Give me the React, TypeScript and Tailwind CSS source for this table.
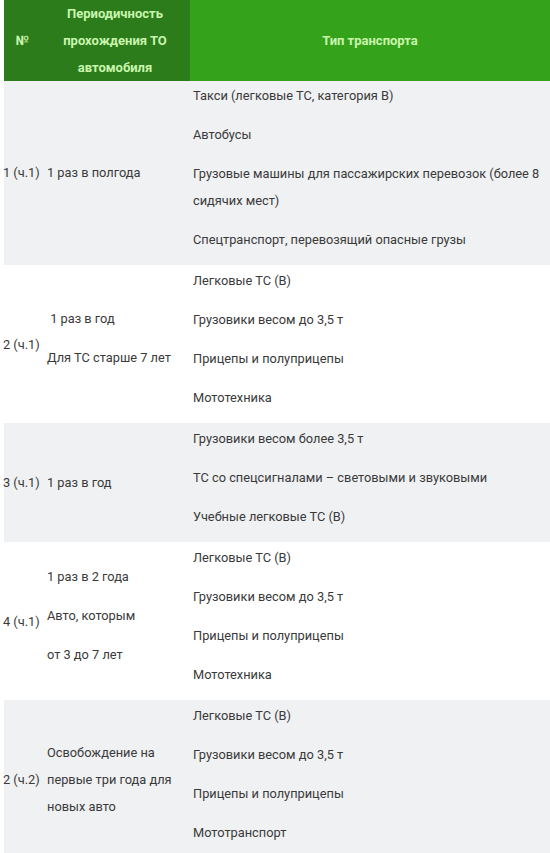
import React from "react";

type Row = {
  num: string;
  period: string[];
  periodParas: boolean;
  types: string[];
  gray: boolean;
};

const rows: Row[] = [
  {
    num: "1 (ч.1)",
    period: ["1 раз в полгода"],
    periodParas: false,
    types: [
      "Такси (легковые ТС, категория B)",
      "Автобусы",
      "Грузовые машины для пассажирских перевозок (более 8 сидячих мест)",
      "Спецтранспорт, перевозящий опасные грузы",
    ],
    gray: true,
  },
  {
    num: "2 (ч.1)",
    period: ["\u00a01 раз в год", "Для ТС старше 7 лет"],
    periodParas: true,
    types: ["Легковые ТС (B)", "Грузовики весом до 3,5 т", "Прицепы и полуприцепы", "Мототехника"],
    gray: false,
  },
  {
    num: "3 (ч.1)",
    period: ["1 раз в год"],
    periodParas: false,
    types: [
      "Грузовики весом более 3,5 т",
      "ТС со спецсигналами – световыми и звуковыми",
      "Учебные легковые ТС (B)",
    ],
    gray: true,
  },
  {
    num: "4 (ч.1)",
    period: ["1 раз в 2 года", "Авто, которым", "от 3 до 7 лет"],
    periodParas: true,
    types: ["Легковые ТС (B)", "Грузовики весом до 3,5 т", "Прицепы и полуприцепы", "Мототехника"],
    gray: false,
  },
  {
    num: "2 (ч.2)",
    period: ["Освобождение на первые три года для новых авто"],
    periodParas: false,
    types: ["Легковые ТС (B)", "Грузовики весом до 3,5 т", "Прицепы и полуприцепы", "Мототранспорт"],
    gray: true,
  },
];

export default function App() {
  return (
    <div
      className="w-[550px] bg-white text-[12.8px] leading-[27px] text-[#3a3a3a]"
      style={{ fontFamily: "Roboto, 'Liberation Sans', sans-serif" }}
    >
      <div className="ml-[4px]">
        <div className="grid grid-cols-[36px_150px_1fr] h-[80px] text-[13px] font-bold text-[#c9f5ae]">
          <div className="bg-[#2c7c1c] flex items-center justify-center">№</div>
          <div className="bg-[#2c7c1c] flex items-center justify-center text-center leading-[27px]">
            Периодичность
            <br />
            прохождения ТО
            <br />
            автомобиля
          </div>
          <div className="bg-[#35a21b] flex items-center justify-center">Тип транспорта</div>
        </div>
        {rows.map((r, i) => (
          <div
            key={i}
            className={`grid grid-cols-[36px_150px_1fr] ${r.gray ? "bg-[#f0f1f3]" : "bg-white"}`}
          >
            <div className="flex items-center whitespace-nowrap -ml-[1px]">{r.num}</div>
            <div className="flex items-center pl-[7px] pr-[10px]">
              {r.periodParas ? (
                <div>
                  {r.period.map((p, j) => (
                    <p key={j} className="mb-[12px]">
                      {p}
                    </p>
                  ))}
                </div>
              ) : (
                <div>{r.period[0]}</div>
              )}
            </div>
            <div className="pl-[3px] pr-[4px] pt-[2px]">
              {r.types.map((t, j) => (
                <p key={j} className="mb-[12px]">
                  {t}
                </p>
              ))}
            </div>
          </div>
        ))}
      </div>
    </div>
  );
}
